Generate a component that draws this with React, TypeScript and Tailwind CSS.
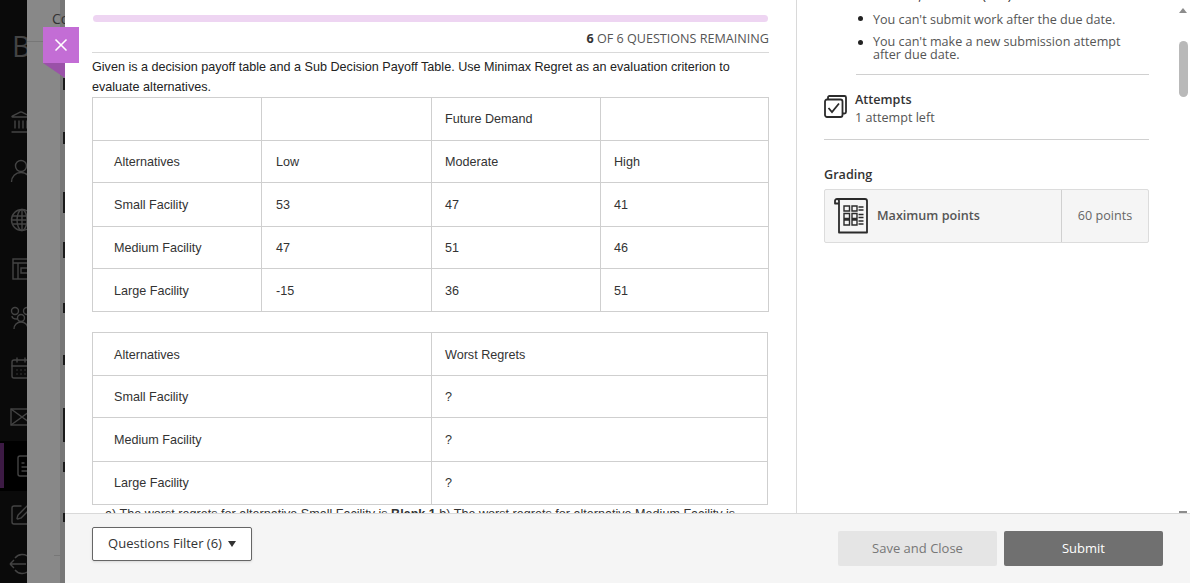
import { Landmark, CalendarDays, FileText, SquarePen, X } from "lucide-react";
import type { ReactNode } from "react";

const payoffRows = [
  ["", "", "Future Demand", ""],
  ["Alternatives", "Low", "Moderate", "High"],
  ["Small Facility", "53", "47", "41"],
  ["Medium Facility", "47", "51", "46"],
  ["Large Facility", "-15", "36", "51"],
];

const regretRows = [
  ["Alternatives", "Worst Regrets"],
  ["Small Facility", "?"],
  ["Medium Facility", "?"],
  ["Large Facility", "?"],
];

// row heights in the reference are not quite even
const rowHeights = ["h-[43px]", "h-[42px] [&>td]:pt-[2px]", "h-[44px] [&>td]:pt-[2px]", "h-[42px] [&>td]:pt-[2px]", "h-[43px] [&>td]:pt-[2px]"];
const regretHeights = ["h-[43px] [&>td]:pt-[2px]", "h-[42px] [&>td]:pt-[2px]", "h-[44px] [&>td]:pt-[2px]", "h-[43px]"];

function NavSvg({ children }: { children: ReactNode }) {
  return (
    <svg width="24" height="24" viewBox="0 0 24 24" fill="none" stroke="currentColor" strokeWidth="1.4">
      {children}
    </svg>
  );
}

const navIcons: ReactNode[] = [
  <Landmark size={24} strokeWidth={1.4} />,
  <NavSvg>
    <circle cx="12" cy="7" r="5.5" />
    <path d="M2.5 23c0-5.500 4-9.500 9.500-9.500s9.500 4 9.500 9.500" />
  </NavSvg>,
  <NavSvg>
    <circle cx="13" cy="12" r="10.500" />
    <ellipse cx="13" cy="12" rx="5" ry="10.500" />
    <path d="M13 1.500v21M3.500 8h19M3.500 16h19M2.500 12h21" />
  </NavSvg>,
  <NavSvg>
    <rect x="4" y="2" width="20" height="20" />
    <path d="M4 6h20M9 6v16M12 11h8v5h-8z" />
  </NavSvg>,
  <NavSvg>
    <circle cx="6" cy="5" r="3.5" />
    <circle cx="12" cy="12" r="3.5" />
    <circle cx="18" cy="5" r="3.5" />
    <path d="M3 10c0 2 2 3 5 3M5 23c0-4 3-7 7-7s7 3 7 7" />
  </NavSvg>,
  <CalendarDays size={24} strokeWidth={1.4} />,
  <NavSvg>
    <rect x="2" y="4" width="22" height="16" />
    <path d="M2 4l22 16M24 4L2 20" />
  </NavSvg>,
  <FileText size={24} strokeWidth={1.4} />,
  <SquarePen size={24} strokeWidth={1.4} />,
  <NavSvg>
    <path d="M6 6A9.5 9.5 0 1 1 6 18" />
    <path d="M1 12h16M1 12l4-4M1 12l4 4" />
  </NavSvg>,
];

function Sidebar() {
  return (
    <div className="w-[27px] shrink-0 bg-[#0a0a0a] overflow-hidden flex flex-col text-[#444]">
      <div className="h-[97px] pl-[12px] pt-[28px] text-[29px] leading-[36px] font-['Open_Sans',sans-serif] shrink-0">B</div>
      {navIcons.map((icon, i) =>
        i === 7 ? (
          <div key={i} className="h-[49.2px] shrink-0 flex items-center bg-black">
            <span className="w-[4px] h-[45px] shrink-0 bg-[#3c1a44]" />
            <div className="w-[26px] shrink-0 ml-[10px]">{icon}</div>
          </div>
        ) : (
          <div key={i} className="h-[49.2px] shrink-0 flex items-center pl-[9px]">
            <div className="w-[26px] shrink-0">{icon}</div>
          </div>
        ),
      )}
    </div>
  );
}

// page behind the dialog, mostly cut off by the panel
function Backdrop() {
  return (
    <div className="w-[38px] shrink-0 bg-[#888888] overflow-hidden flex">
      <div className="relative z-10 w-[33px] shrink-0 pl-[25px] pt-[11px] text-[14px] leading-[16px] text-[#333] font-['Open_Sans',sans-serif] whitespace-nowrap">
        Co
      </div>
      <div className="w-[5px] shrink-0 bg-[#777777] flex flex-col items-end">
        <span className="w-[2px] h-[12px] mt-[78px] bg-[#1a1a1a]" />
        <span className="w-[2px] h-[12px] mt-[42px] bg-[#1a1a1a]" />
        <span className="w-[2px] h-[21px] mt-[48px] bg-[#1a1a1a]" />
        <span className="w-[2px] h-[16px] mt-[29px] bg-[#1a1a1a]" />
        <span className="w-[2px] h-[10px] mt-[45px] bg-[#1a1a1a]" />
        <span className="w-[2px] h-[10px] mt-[42px] bg-[#1a1a1a]" />
        <span className="w-[2px] h-[34px] mt-[43px] bg-[#1a1a1a]" />
        <span className="w-[2px] h-[10px] mt-[20px] bg-[#1a1a1a]" />
        <span className="w-[2px] h-[9px] mt-[41px] bg-[#1a1a1a]" />
      </div>
    </div>
  );
}

function QuestionArea() {
  return (
    <div className="w-[732px] shrink-0 border-r border-[#d9d9d9] px-[27px] overflow-hidden font-['Liberation_Sans',sans-serif] text-[12.6px] text-[#333]">
      <div className="mt-[15px] h-[7px] w-[675px] ml-[1px] rounded-full bg-[#eed5f2]" />
      <div className="mt-[9px] h-[22px] border-b border-[#d9d9d9] flex justify-end text-[12.6px] leading-[16px] text-[#555] font-['Open_Sans',sans-serif]">
        <span>
          <b className="text-[#333] font-bold">6</b> OF 6 QUESTIONS REMAINING
        </span>
      </div>
      <p className="w-[660px] mt-[4px] leading-[20px] text-[#222]">
        Given is a decision payoff table and a Sub Decision Payoff Table. Use Minimax Regret as an evaluation criterion to evaluate alternatives.
      </p>
      <table className="w-[676px] table-fixed border-collapse">
        <colgroup>
          <col className="w-[169px]" />
          <col className="w-[170px]" />
          <col className="w-[169px]" />
          <col className="w-[168px]" />
        </colgroup>
        <tbody>
          {payoffRows.map((row, r) => (
            <tr key={r} className={rowHeights[r]}>
              {row.map((cell, c) => (
                <td
                  key={c}
                  className={
                    c === 0
                      ? "border border-[#cfcfcf] p-0 pl-[21px] text-[#333]"
                      : c === 1
                        ? "border border-[#cfcfcf] p-0 pl-[14px] text-[#333]"
                        : "border border-[#cfcfcf] p-0 pl-[13px] text-[#333]"
                  }
                >
                  {cell}
                </td>
              ))}
            </tr>
          ))}
        </tbody>
      </table>
      <table className="mt-[20px] w-[676px] table-fixed border-collapse">
        <tbody>
          {regretRows.map((row, r) => (
            <tr key={r} className={regretHeights[r]}>
              <td className="w-[339px] border border-[#cfcfcf] p-0 pl-[21px]">{row[0]}</td>
              <td className="border border-[#cfcfcf] p-0 pl-[13px]">{row[1]}</td>
            </tr>
          ))}
        </tbody>
      </table>
      <p className="mt-[2px] pl-[13px] whitespace-nowrap leading-[14px] text-[#333]">
        a) The worst regrets for alternative Small Facility is <b>Blank 1</b> b) The worst regrets for alternative Medium Facility is
      </p>
    </div>
  );
}

function AttemptsIcon() {
  return (
    <svg width="23" height="23" viewBox="0 0 23 23" fill="none" stroke="#2b2b2b" strokeWidth="1.8">
      <rect x="1" y="4.5" width="17.5" height="17.5" rx="2" />
      <path d="M4 4.5V2.5C4 1.7 4.7 1 5.5 1H20.5C21.3 1 22 1.7 22 2.5V17C22 17.8 21.3 18.5 20.5 18.5H18.5" />
      <path d="M4.5 13l3.5 4 7-8.5" />
    </svg>
  );
}

function GradingIcon() {
  return (
    <svg width="34" height="36" viewBox="0 0 34 36" fill="none" stroke="#2b2b2b" strokeWidth="1.8">
      <path d="M5 6V2.8C5 1.8 4 1 3 1S1 1.8 1 2.8V5.5h4M3 1h28C32 1 33 2 33 3v31.5H5V6" strokeLinejoin="round" />
      <path d="M10 8h5.5v5H10zM18 8h5v5h-5zM10 15.5h5.5v5H10zM18 15.5h5v5h-5zM10 22h5.5v5H10zM18 22h5v5h-5z" strokeWidth="1.4" />
      <path d="M24.5 9h5M24.5 12h5M24.5 16.5h5M24.5 19.5h5M24.5 23h5M24.5 26h5" strokeWidth="1.3" />
    </svg>
  );
}

function Bullet({ children, className }: { children: ReactNode; className: string }) {
  return (
    <li className={"flex " + className}>
      <span className="w-[4.5px] h-[4.5px] mt-[5px] mr-[10.5px] shrink-0 rounded-full bg-[#222]" />
      <span>{children}</span>
    </li>
  );
}

function DetailsPanel() {
  return (
    <div className="flex-1 min-w-0 overflow-hidden pl-[27px] font-['Open_Sans',sans-serif] text-[12.6px] text-[#555]">
      <div className="w-[325px] -mt-[11px]">
        <ul className="pl-[34px]">
          <Bullet className="leading-[14px] text-[#333]">4/20/24, 11:59 PM (CST)</Bullet>
          <Bullet className="mt-[8px] leading-[17px]">You can't submit work after the due date.</Bullet>
          <Bullet className="mt-[7px] leading-[13px]">You can't make a new submission attempt after due date.</Bullet>
        </ul>
        <div className="mt-[13px] ml-[32px] border-t border-[#d0d0d0]" />
        <div className="mt-[15px] flex gap-[8px] h-[38px]">
          <div className="pt-[5px]">
            <AttemptsIcon />
          </div>
          <div className="pt-[1px]">
            <div className="font-semibold text-[#333] leading-[18px]">Attempts</div>
            <div className="leading-[18px]">1 attempt left</div>
          </div>
        </div>
        <div className="mt-[11px] border-t border-[#d0d0d0]" />
        <div className="mt-[26px] font-semibold text-[#333] leading-[18px]">Grading</div>
        <div className="mt-[5px] h-[54px] flex items-center bg-[#f5f5f5] border border-[#dcdcdc] rounded-[2px]">
          <div className="flex-1 flex items-center pl-[9px] gap-[9px]">
            <GradingIcon />
            <span className="font-semibold text-[#555]">Maximum points</span>
          </div>
          <div className="w-[87px] h-full border-l border-[#d0d0d0] flex items-center justify-center text-[#666]">60 points</div>
        </div>
      </div>
    </div>
  );
}

function Scrollbar() {
  return (
    <div className="w-[14px] shrink-0 flex flex-col items-center">
      <span className="mt-[8px] w-0 h-0 border-x-[4px] border-x-transparent border-b-[5px] border-b-[#8c8c8c]" />
      <span className="mt-[28px] w-[9px] h-[56px] rounded-full bg-[#b9b9b9]" />
      <span className="mt-auto w-[8px] h-[2px] bg-[#8c8c8c]" />
    </div>
  );
}

function Footer() {
  return (
    <div className="h-[70px] shrink-0 bg-[#f5f5f5] border-t border-[#d9d9d9] px-[27px] flex font-['Open_Sans',sans-serif] text-[13px]">
      <button className="mt-[13px] w-[160px] h-[34px] bg-white border border-[#666] rounded-[2px] shadow-sm text-[#333] font-medium flex items-center justify-center gap-[6px]">
        Questions Filter (6)
        <span className="w-0 h-0 border-x-[4px] border-x-transparent border-t-[6px] border-t-[#333]" />
      </button>
      <button className="ml-auto mt-[17px] w-[159px] h-[35px] bg-[#e5e5e5] rounded-[2px] text-[#777]">Save and Close</button>
      <button className="ml-[7px] mt-[17px] w-[159px] h-[35px] bg-[#707070] rounded-[2px] text-white font-medium">Submit</button>
    </div>
  );
}

export default function App() {
  return (
    <div className="relative w-[1190px] h-[583px] flex overflow-hidden bg-white">
      <Sidebar />
      <Backdrop />
      <div className="flex-1 min-w-0 flex flex-col bg-white">
        <div className="flex-1 min-h-0 flex overflow-hidden">
          <QuestionArea />
          <DetailsPanel />
          <Scrollbar />
        </div>
        <Footer />
      </div>

      {/* line from logo, and close tab hanging over the panel edge */}
      <div className="absolute left-[27px] top-[41px] w-[16px] h-px bg-[#777]" />
      <div className="absolute left-[54px] top-[555px] w-[11px] h-px bg-[#777]" />
      <button className="absolute left-[43px] top-[27px] w-[36px] h-[36px] bg-[#c36dd5] text-white flex items-center justify-center">
        <X size={20} strokeWidth={2} />
      </button>
      <div className="absolute left-[43px] top-[63px] w-0 h-0 border-l-[22px] border-l-transparent border-t-[15px] border-t-[#9a52a8]" />
    </div>
  );
}
